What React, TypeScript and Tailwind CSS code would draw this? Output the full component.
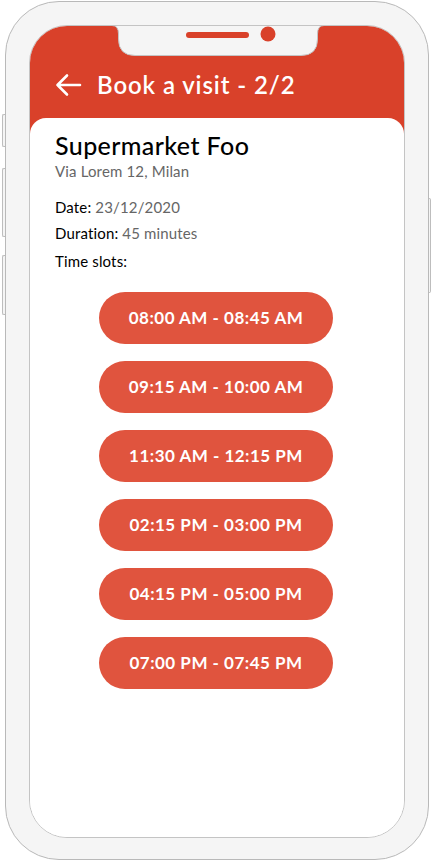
import React from 'react';

const slots = [
  '08:00 AM - 08:45 AM',
  '09:15 AM - 10:00 AM',
  '11:30 AM - 12:15 PM',
  '02:15 PM - 03:00 PM',
  '04:15 PM - 05:00 PM',
  '07:00 PM - 07:45 PM',
];

const Notch: React.FC = () => (
  <div className="absolute left-[82px] top-[-1px] h-[32px] w-[212px]">
    <svg width="212" height="32" viewBox="0 0 212 32" className="absolute inset-0">
      <path
        d="M0,0.5 Q6.5,0.5 6.5,9 L6.5,14 Q6.5,30.5 23,30.5 L189,30.5 Q205.5,30.5 205.5,14 L205.5,9 Q205.5,0.5 212,0.5 Z"
        fill="#f5f5f5"
      />
      <path
        d="M0,0.5 Q6.5,0.5 6.5,9 L6.5,14 Q6.5,30.5 23,30.5 L189,30.5 Q205.5,30.5 205.5,14 L205.5,9 Q205.5,0.5 212,0.5"
        fill="none"
        stroke="#c4c4c4"
        strokeWidth="1"
      />
      <rect x="74" y="7" width="63" height="6" rx="3" fill="#d9412a" />
      <circle cx="156" cy="9" r="7.5" fill="#d9412a" />
    </svg>
  </div>
);

export default function App() {
  return (
    <div className="relative h-[862px] w-[433px] bg-white pt-[1px] font-['Lato',sans-serif]">
      {/* side buttons */}
      <div className="absolute left-[2px] top-[114px] h-[33px] w-[4px] rounded-l-[2px] border border-r-0 border-[#bdbdbd] bg-[#f5f5f5]" />
      <div className="absolute left-[2px] top-[168px] h-[69px] w-[4px] rounded-l-[2px] border border-r-0 border-[#bdbdbd] bg-[#f5f5f5]" />
      <div className="absolute left-[2px] top-[255px] h-[60px] w-[4px] rounded-l-[2px] border border-r-0 border-[#bdbdbd] bg-[#f5f5f5]" />
      <div className="absolute left-[427px] top-[198px] h-[95px] w-[4px] rounded-r-[2px] border border-l-0 border-[#bdbdbd] bg-[#f5f5f5]" />

      {/* phone body */}
      <div className="relative ml-[5px] h-[859px] w-[424px] rounded-[54px] border border-[#b9b9b9] bg-[#f5f5f5] px-[23px] pt-[23px]">
        {/* screen */}
        <div className="relative flex h-[813px] w-[376px] flex-col overflow-hidden rounded-[38px] border border-[#c4c4c4] bg-white">
          <div className="bg-[#d9412a]">
            <Notch />
            <header className="flex h-[92px] items-center gap-[15px] pl-[25px] pt-[25px] text-white">
              <svg width="27" height="24" viewBox="0 0 27 24" fill="none" stroke="white" strokeWidth="2.6" strokeLinecap="round" strokeLinejoin="round">
                <path d="M25 12H2.5M12 2.5L2.5 12l9.5 9.5" />
              </svg>
              <h1 className="text-[24px] font-semibold leading-none tracking-[0.9px]">Book a visit - 2/2</h1>
            </header>
            <div className="h-[16px] rounded-t-[16px] bg-white" />
          </div>
          <main className="flex flex-1 flex-col bg-white px-[25px] pt-0">
            <h2 className="-mt-[4px] text-[25px] font-medium leading-[30px] tracking-[0.4px] text-black">Supermarket Foo</h2>
            <p className="mt-[1px] text-[15px] leading-[20px] tracking-[0.15px] text-[#666]">Via Lorem 12, Milan</p>
            <p className="mt-[16px] text-[15px] leading-[20px] tracking-[0.15px] text-black">
              Date: <span className="text-[#666]">23/12/2020</span>
            </p>
            <p className="mt-[6px] text-[15px] leading-[20px] tracking-[0.15px] text-black">
              Duration: <span className="text-[#666]">45 minutes</span>
            </p>
            <p className="mt-[8px] text-[15px] leading-[20px] tracking-[0.15px] text-black">Time slots:</p>
            <div className="mt-[21px] flex flex-col items-center gap-[17px] pr-[2px]">
              {slots.map((s) => (
                <button
                  key={s}
                  className="flex h-[52px] w-[234px] items-center justify-center rounded-full bg-[#e0543e] text-[17px] font-bold tracking-[0.5px] text-white"
                >
                  {s}
                </button>
              ))}
            </div>
          </main>
        </div>
      </div>
    </div>
  );
}
